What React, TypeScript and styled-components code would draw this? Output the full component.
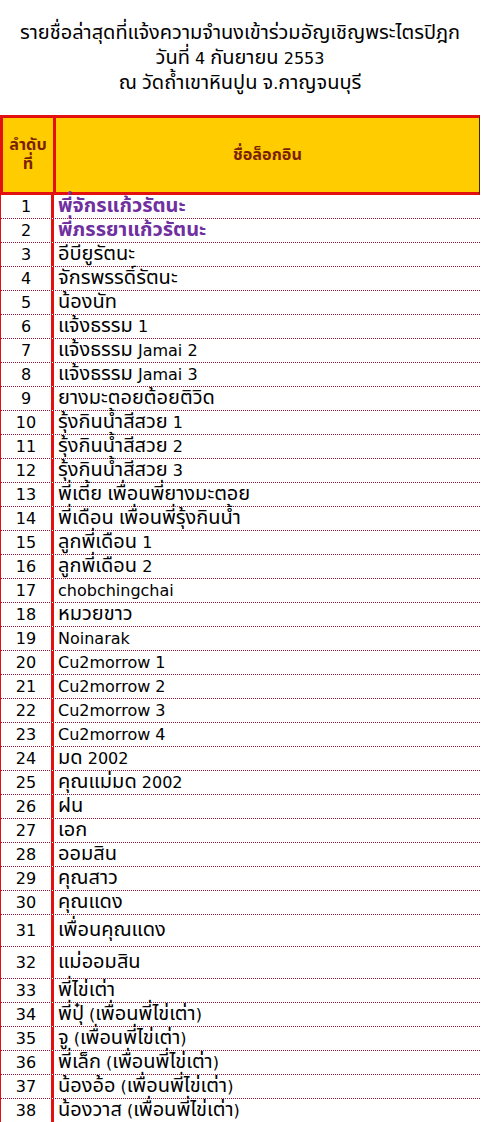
import React from 'react';
import styled, { createGlobalStyle } from 'styled-components';

const GlobalStyle = createGlobalStyle`
  body {
    margin: 0;
    background: #fff;
    font-family: "DejaVu Sans", Tahoma, "Noto Sans Thai", sans-serif;
    color: #000;
  }
`;

const Page = styled.div`
  width: 480px;
`;

const Title = styled.div`
  padding-top: 21px;
  text-align: center;
  font-size: 16px;
  line-height: 24px;
`;

// Thai runs are drawn a little larger so they match the Tahoma proportions
const Thai = styled.span`
  font-family: "Noto Sans Thai", Tahoma, sans-serif;
  font-size: 1.25em;
`;

const Table = styled.div`
  margin-top: 19px;
`;

const Header = styled.div`
  display: grid;
  grid-template-columns: 53px 1fr;
  height: 80px;
  box-sizing: border-box;
  border: 3px solid #e31010;
  border-right: 1px solid #3a2a00;
  background: #ffcc00;
  color: #7a1f00;
  font-weight: bold;
  font-size: 13px;
`;

const HeadCell = styled.div<{ $first?: boolean }>`
  display: flex;
  align-items: center;
  justify-content: center;
  text-align: center;
  line-height: 19px;
  ${p => p.$first && 'border-right: 3px solid #e31010;'}
`;

const Row = styled.div<{ $tall?: boolean }>`
  display: grid;
  grid-template-columns: 53px 1fr;
  height: ${p => (p.$tall ? 32 : 24)}px;
  box-sizing: border-box;
  border-left: 1px solid #e31010;
  border-bottom: 1px dotted #9a1030;
  font-size: 16px;
  line-height: 20px;
`;

const NumCell = styled.div`
  border-right: 3px solid #e31010;
  display: flex;
  align-items: center;
  justify-content: center;
`;

const NameCell = styled.div<{ $vip?: boolean }>`
  display: flex;
  align-items: center;
  padding-left: 4px;
  white-space: nowrap;
  color: ${p => (p.$vip ? '#7030a0' : '#000')};
  font-weight: ${p => (p.$vip ? 'bold' : 'normal')};
`;

const Mixed = ({ text }: { text: string }) => (
  <span>
    {text.split(/([\u0E00-\u0E7F]+)/).map((part, i) =>
      i % 2 === 1 ? <Thai key={i}>{part}</Thai> : part
    )}
  </span>
);

const names = [
  'พี่จักรแก้วรัตนะ',
  'พี่ภรรยาแก้วรัตนะ',
  'อีบียูรัตนะ',
  'จักรพรรดิ์รัตนะ',
  'น้องนัท',
  'แจ้งธรรม 1',
  'แจ้งธรรม Jamai 2',
  'แจ้งธรรม Jamai 3',
  'ยางมะตอยต้อยติวิด',
  'รุ้งกินน้ำสีสวย 1',
  'รุ้งกินน้ำสีสวย 2',
  'รุ้งกินน้ำสีสวย 3',
  'พี่เตี้ย เพื่อนพี่ยางมะตอย',
  'พี่เดือน เพื่อนพี่รุ้งกินน้ำ',
  'ลูกพี่เดือน 1',
  'ลูกพี่เดือน 2',
  'chobchingchai',
  'หมวยขาว',
  'Noinarak',
  'Cu2morrow 1',
  'Cu2morrow 2',
  'Cu2morrow 3',
  'Cu2morrow 4',
  'มด 2002',
  'คุณแม่มด 2002',
  'ฝน',
  'เอก',
  'ออมสิน',
  'คุณสาว',
  'คุณแดง',
  'เพื่อนคุณแดง',
  'แม่ออมสิน',
  'พี่ไข่เต่า',
  'พี่ปุ๋ (เพื่อนพี่ไข่เต่า)',
  'จู (เพื่อนพี่ไข่เต่า)',
  'พี่เล็ก (เพื่อนพี่ไข่เต่า)',
  'น้องอ้อ (เพื่อนพี่ไข่เต่า)',
  'น้องวาส (เพื่อนพี่ไข่เต่า)',
];

export default function App() {
  return (
    <Page>
      <GlobalStyle />
      <Title>
        <Mixed text="รายชื่อล่าสุดที่แจ้งความจำนงเข้าร่วมอัญเชิญพระไตรปิฎก" />
        <br />
        <Mixed text="วันที่ 4 กันยายน 2553" />
        <br />
        <Mixed text="ณ วัดถ้ำเขาหินปูน จ.กาญจนบุรี" />
      </Title>
      <Table>
        <Header>
          <HeadCell $first>
            <span>
              <Thai>ลำดับ</Thai>
              <br />
              <Thai>ที่</Thai>
            </span>
          </HeadCell>
          <HeadCell>
            <Mixed text="ชื่อล็อกอิน" />
          </HeadCell>
        </Header>
        {names.map((name, i) => (
          <Row key={i} $tall={i === 30 || i === 31}>
            <NumCell>{i + 1}</NumCell>
            <NameCell $vip={i < 2}>
              <Mixed text={name} />
            </NameCell>
          </Row>
        ))}
      </Table>
    </Page>
  );
}
